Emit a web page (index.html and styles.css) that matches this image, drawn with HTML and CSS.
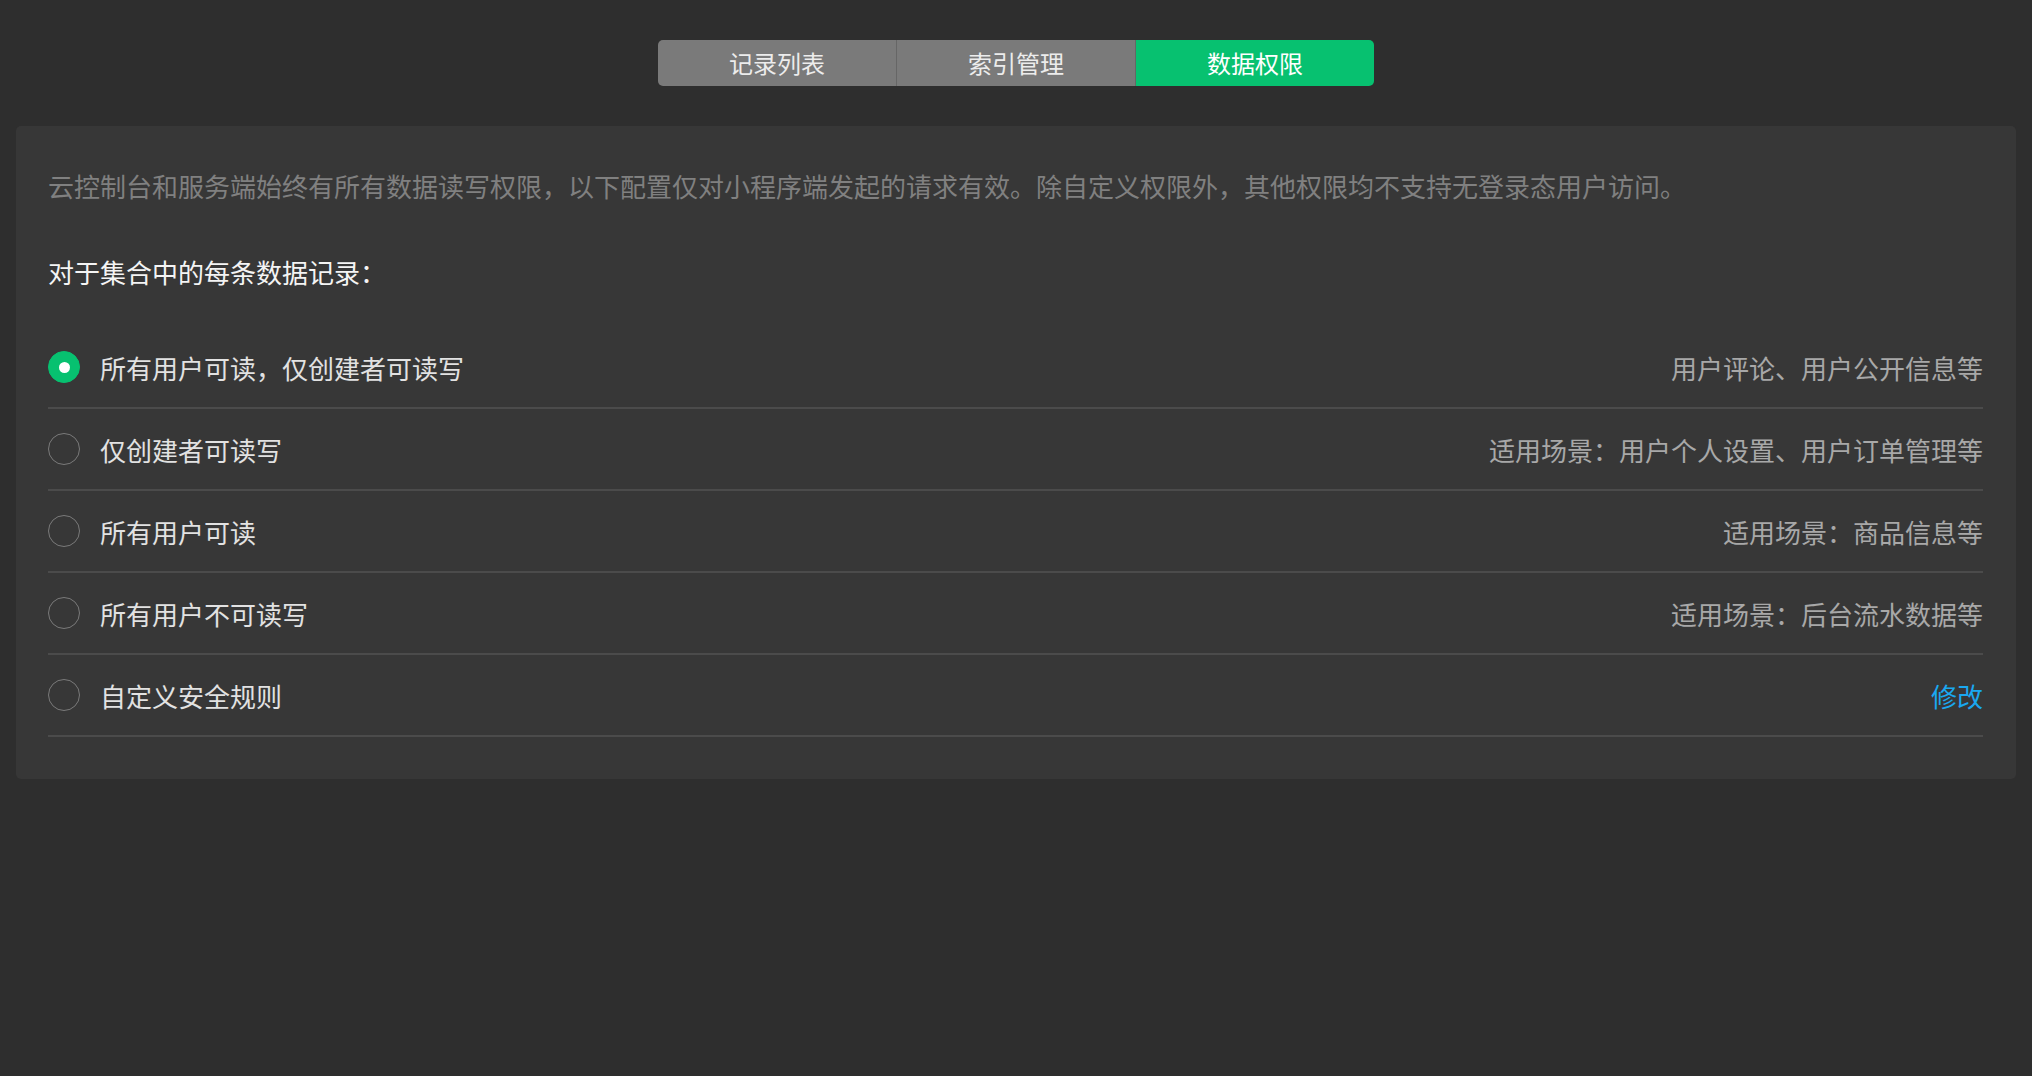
FILE: index.html
```html
<!DOCTYPE html>
<html lang="zh-CN">
<head>
  <meta charset="UTF-8">
  <title>数据权限</title>
  <link rel="stylesheet" href="styles.css">
</head>
<body>
  <div class="tabs">
    <div class="tab">记录列表</div>
    <div class="tab">索引管理</div>
    <div class="tab active">数据权限</div>
  </div>

  <div class="panel">
    <p class="notice">云控制台和服务端始终有所有数据读写权限，以下配置仅对小程序端发起的请求有效。除自定义权限外，其他权限均不支持无登录态用户访问。</p>
    <p class="heading">对于集合中的每条数据记录：</p>

    <div class="options">
      <div class="option checked">
        <span class="radio"></span>
        <span class="label">所有用户可读，仅创建者可读写</span>
        <span class="hint">用户评论、用户公开信息等</span>
      </div>
      <div class="option">
        <span class="radio"></span>
        <span class="label">仅创建者可读写</span>
        <span class="hint">适用场景：用户个人设置、用户订单管理等</span>
      </div>
      <div class="option">
        <span class="radio"></span>
        <span class="label">所有用户可读</span>
        <span class="hint">适用场景：商品信息等</span>
      </div>
      <div class="option">
        <span class="radio"></span>
        <span class="label">所有用户不可读写</span>
        <span class="hint">适用场景：后台流水数据等</span>
      </div>
      <div class="option">
        <span class="radio"></span>
        <span class="label">自定义安全规则</span>
        <a class="link" href="#">修改</a>
      </div>
    </div>
  </div>
</body>
</html>
```

FILE: styles.css
```css
html {
  box-sizing: border-box;
  background: #2e2e2e;
}

*, *:before, *:after {
  box-sizing: inherit;
}

body {
  margin: 0;
  min-height: 100vh;
  padding: 40px 16px 0;
  font-family: "Noto Sans CJK SC", "Noto Sans", sans-serif;
  font-size: 26px;
  color: #e2e2e2;
}

.tabs {
  display: flex;
  width: 716px;
  height: 46px;
  margin: 0 auto;
  border-radius: 5px;
  overflow: hidden;
}

.tab {
  flex: 1;
  display: flex;
  align-items: center;
  justify-content: center;
  padding-bottom: 2px;
  background: #7a7a7a;
  color: #ececec;
  font-size: 24px;
  border-right: 1px solid #666;
}

.tab:last-child {
  border-right: 0;
}

.tab.active {
  background: #07c170;
  color: #fff;
}

.panel {
  margin-top: 40px;
  background: #373737;
  border-radius: 5px;
  padding: 42px 33px 42px 32px;
}

.notice {
  margin: 0;
  line-height: 36px;
  color: #808080;
}

.heading {
  margin: 50px 0 0;
  line-height: 36px;
  color: #f4f4f4;
}

.options {
  margin-top: 37px;
}

.option {
  display: flex;
  align-items: center;
  height: 82px;
  border-bottom: 2px solid #4b4b4b;
}

.radio {
  width: 32px;
  height: 32px;
  border-radius: 50%;
  border: 1px solid #7a7a7a;
  margin-right: 20px;
  flex-shrink: 0;
  position: relative;
}

.option.checked .radio {
  background: #07c170;
  border-color: #07c170;
}

.option.checked .radio:after {
  content: "";
  position: absolute;
  left: 50%;
  top: 50%;
  width: 11px;
  height: 11px;
  margin: -5.5px 0 0 -5.5px;
  border-radius: 50%;
  background: #fff;
}

.label {
  flex: 1;
  color: #e2e2e2;
}

.hint {
  color: #a8a8a8;
}

.link {
  color: #1aa8f0;
  text-decoration: none;
}
```
